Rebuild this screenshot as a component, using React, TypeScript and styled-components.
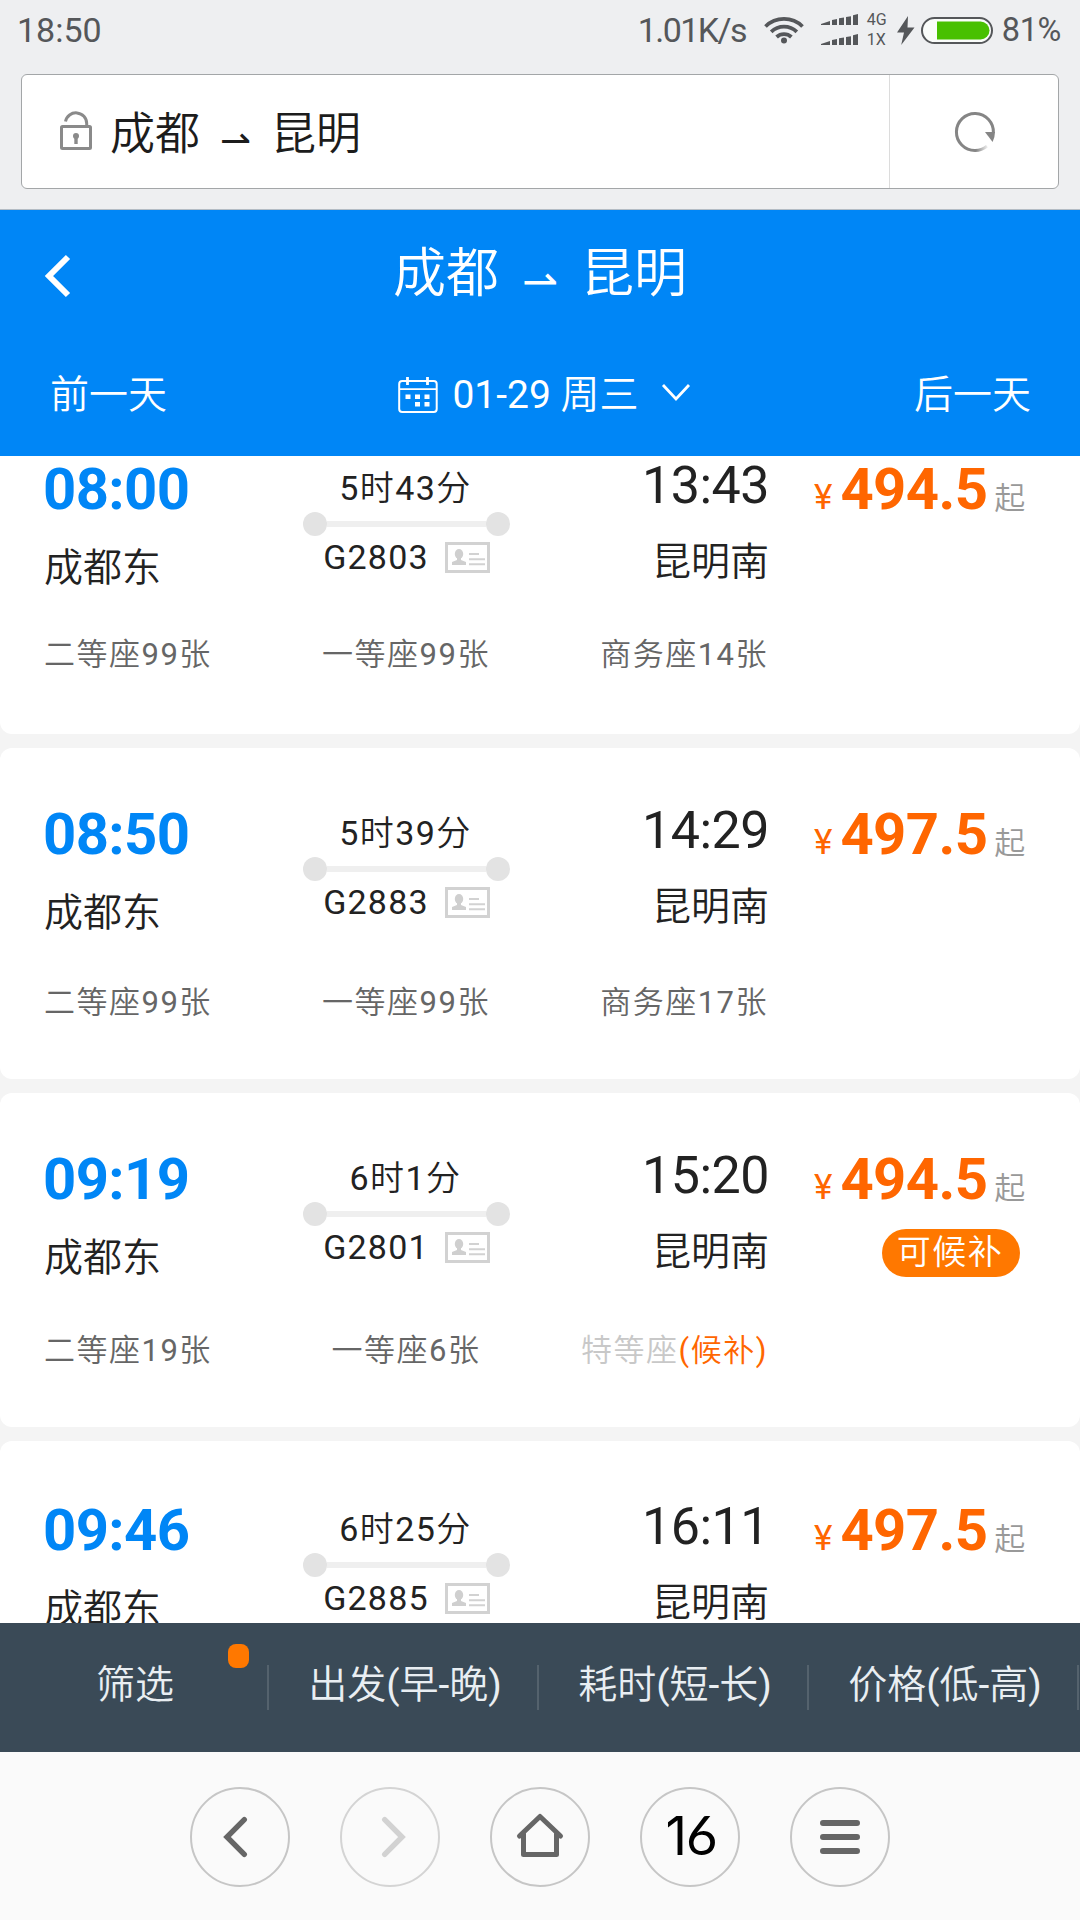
import React from "react";
import styled, { createGlobalStyle } from "styled-components";

const cjk = `"Noto Sans CJK SC DemiLight", "Noto Sans CJK SC", sans-serif`;

const GlobalStyle = createGlobalStyle`
  * { box-sizing: border-box; }
  html, body { margin: 0; padding: 0; }
  body {
    width: 1080px;
    height: 1920px;
    overflow: hidden;
    background: #f4f4f4;
    font-family: Roboto, ${cjk};
  }
`;

const Screen = styled.div`
  width: 1080px;
  height: 1920px;
  display: flex;
  flex-direction: column;
  overflow: hidden;
`;

const BrowserTop = styled.div`
  height: 210px;
  flex: none;
  background: #eeeff1;
  border-bottom: 1px solid #b4bcc4;
  display: flex;
  flex-direction: column;
`;

const StatusBar = styled.div`
  height: 74px;
  padding: 0 19px 14px 17px;
  display: flex;
  align-items: center;
  color: #55575a;
  font-size: 34px;
`;

const Clock = styled.span`
  flex: 1;
`;
const Speed = styled.span`
  margin-right: 18px;
  letter-spacing: -1.6px;
`;
const Percent = styled.span`
  margin-left: 9px;
  font-size: 32.5px;
  letter-spacing: -0.4px;
`;
const NetLabels = styled.div`
  display: flex;
  flex-direction: column;
  width: 24px;
  margin: 0 6px 0 8px;
  font-size: 16px;
  line-height: 20px;
`;
const SignalGroup = styled.div`
  display: flex;
  align-items: center;
  margin-left: 17px;
`;
const BatteryGroup = styled.div`
  display: flex;
  align-items: center;
  gap: 6px;
`;

const AddressBar = styled.div`
  height: 115px;
  margin: 0 21px;
  border: 1px solid #a3a6a8;
  border-radius: 6px;
  background: #fff;
  display: flex;
`;
const AddressText = styled.div`
  flex: 1;
  display: flex;
  align-items: center;
  padding: 0 0 3px 37px;
  font-size: 45px;
  color: #1c1c1c;
  svg { margin-right: 17px; }
`;
const RefreshButton = styled.div`
  width: 169px;
  border-left: 1px solid #dcdcdc;
  display: flex;
  align-items: center;
  justify-content: center;
  padding-left: 1px;
`;

const City = styled.span`
  font-family: ${cjk};
`;
const Harpoon = styled.span<{ $size: number; $gap: number; $drop: number }>`
  font-family: "DejaVu Sans", sans-serif;
  font-size: ${(p) => p.$size}px;
  margin: 0 ${(p) => p.$gap}px;
  padding-top: ${(p) => p.$drop}px;
`;

const Header = styled.header`
  height: 246px;
  flex: none;
  background: #0086f6;
  color: #fff;
  display: flex;
  flex-direction: column;
`;
const TitleRow = styled.div`
  height: 126px;
  padding: 0 42px;
  display: grid;
  grid-template-columns: 60px 1fr 60px;
  align-items: center;
`;
const BackArrow = styled.svg`
  margin-top: 6px;
`;
const Title = styled.div`
  display: flex;
  justify-content: center;
  align-items: center;
  height: 78px;
  font-size: 53px;
  padding-bottom: 9px;
`;
const DateRow = styled.div`
  height: 120px;
  padding: 0 49px 10px 50px;
  display: flex;
  align-items: center;
  justify-content: space-between;
  font-size: 39px;
`;
const DayLink = styled.span`
  font-family: ${cjk};
`;
const DatePick = styled.div`
  display: flex;
  align-items: center;
  margin-left: 8px;
  white-space: pre;
  svg:first-child { margin: 7px 14px 0 0; }
  svg:last-child { margin: 4px 0 0 22px; }
`;

const List = styled.main`
  flex: 1;
  min-height: 0;
  overflow: hidden;
  display: flex;
  flex-direction: column;
  background: #f4f4f4;
`;
const Card = styled.article<{ $height: number; $top: number; $first?: boolean }>`
  height: ${(p) => p.$height}px;
  flex: none;
  margin-bottom: 14px;
  padding-top: ${(p) => p.$top}px;
  background: #fff;
  border-radius: ${(p) => (p.$first ? "0 0 12px 12px" : "12px")};
`;
const Trip = styled.div<{ $height: number }>`
  height: ${(p) => p.$height}px;
  padding-left: 44px;
  display: grid;
  grid-template-columns: 241px 243px 241px 1fr;
  color: #222;
`;
const Column = styled.div<{ $align: string }>`
  display: flex;
  flex-direction: column;
  align-items: ${(p) => p.$align};
`;
const Depart = styled.div`
  margin-left: -1px;
  font-size: 58px;
  line-height: 60px;
  font-weight: 700;
  letter-spacing: -0.6px;
  color: #0086f6;
`;
const Arrive = styled.div`
  font-size: 52px;
  line-height: 54px;
  letter-spacing: -0.5px;
`;
const Station = styled.div`
  margin-top: 22px;
  font-family: ${cjk};
  font-size: 39px;
  line-height: 46px;
`;
const Duration = styled.div`
  margin: 9px 2px 0 0;
  height: 40px;
  font-size: 34px;
  line-height: 40px;
  letter-spacing: 1.4px;
`;
const Track = styled.div`
  width: 207px;
  height: 24px;
  margin-top: 4px;
  display: flex;
  align-items: center;
`;
const Stop = styled.i`
  width: 24px;
  height: 24px;
  border-radius: 50%;
  background: #e3e3e3;
`;
const Rail = styled.i`
  flex: 1;
  height: 6px;
  background: #efefef;
`;
const TrainNo = styled.div`
  height: 42px;
  display: flex;
  align-items: center;
  font-size: 34px;
  letter-spacing: 1.2px;
  svg { margin-left: 16px; }
`;
const Price = styled.div`
  display: flex;
  align-items: baseline;
  margin-left: 45px;
  color: #ff6600;
  font-size: 35px;
  line-height: 60px;
`;
const Amount = styled.b`
  font-size: 58px;
  margin-left: 8px;
  letter-spacing: -0.6px;
`;
const From = styled.small`
  font-size: 31px;
  color: #999;
  margin-left: 7px;
`;
const Badge = styled.div`
  margin: 10px 60px 0 0;
  align-self: flex-end;
  width: 138px;
  height: 48px;
  padding-right: 2px;
  border-radius: 24px;
  background: #ff7800;
  color: #fff;
  font-size: 34px;
  line-height: 47px;
  letter-spacing: 1.5px;
  text-align: center;
`;
const Seats = styled.div`
  width: 768px;
  padding-left: 44px;
  display: grid;
  grid-template-columns: 241px 242px 241px;
  font-size: 31px;
  line-height: 36px;
  letter-spacing: 1.5px;
  color: #666;
  white-space: nowrap;
`;
const Seat = styled.span<{ $align: string }>`
  justify-self: ${(p) => p.$align};
`;
const SoldOut = styled.span`
  color: #c8c8c8;
`;
const Waitlist = styled.span`
  color: #ff6600;
`;

const FilterBar = styled.div`
  height: 129px;
  flex: none;
  display: grid;
  grid-template-columns: repeat(4, 270px);
  background: #3a4a57;
`;
const FilterItem = styled.div`
  position: relative;
  display: flex;
  align-items: center;
  justify-content: center;
  padding-bottom: 13px;
  color: #e9eef2;
  font-size: 39px;
  &::after {
    content: "";
    position: absolute;
    right: 1px;
    top: 42px;
    width: 2px;
    height: 45px;
    background: #54626d;
  }
`;
const Dot = styled.i`
  position: absolute;
  left: 228px;
  top: 21px;
  width: 21px;
  height: 24px;
  border-radius: 8px;
  background: #ff7800;
`;

const NavBar = styled.nav`
  height: 168px;
  flex: none;
  padding-top: 2px;
  background: #fafafa;
  display: flex;
  align-items: center;
  justify-content: center;
  gap: 50px;
`;
const NavButton = styled.div<{ $dim?: boolean }>`
  width: 100px;
  height: 100px;
  border: 2px solid ${(p) => (p.$dim ? "#d4d4d4" : "#c6c6c6")};
  border-radius: 50%;
  display: flex;
  align-items: center;
  justify-content: center;
`;
const TabCount = styled.span`
  display: flex;
  align-items: baseline;
  padding: 0 0 4px 2px;
  font-family: Inter, sans-serif;
  font-size: 53px;
  line-height: 60px;
  letter-spacing: -1px;
  color: #000;
`;
const CountTail = styled.span`
  font-family: Lato, sans-serif;
  font-size: 54px;
`;

const LockIcon = () => (
  <svg width="34" height="42" viewBox="0 0 34 42" fill="none" stroke="#8a8a8a" strokeWidth="3">
    <path d="M6.5 12.5a10.7 10.7 0 0 1 21.2 2V18" />
    <rect x="2.5" y="17.5" width="29" height="22" rx="1" />
    <circle cx="17" cy="27" r="3" fill="#8a8a8a" stroke="none" />
    <path d="M17 27v8" strokeWidth="3.4" />
  </svg>
);

const RefreshIcon = () => (
  <svg width="42" height="42" viewBox="0 0 42 42" fill="none">
    <defs>
      <linearGradient id="fade" x1="22" y1="0" x2="34" y2="0" gradientUnits="userSpaceOnUse">
        <stop offset="0" stopColor="#858585" />
        <stop offset="1" stopColor="#858585" stopOpacity="0.1" />
      </linearGradient>
    </defs>
    <path d="M39.4 22A18.5 18.5 0 1 0 21 39.5" stroke="#858585" strokeWidth="3" />
    <path d="M21 39.5a18.5 18.5 0 0 0 12-4.4" stroke="url(#fade)" strokeWidth="3" />
    <path d="M31 21h10q0 5-2.4 10z" fill="#858585" />
  </svg>
);

const WifiIcon = () => (
  <svg width="40" height="28" viewBox="0 0 40 28" fill="none" stroke="#55575a" strokeWidth="3.8">
    <path d="M1.5 10.5a26.5 26.5 0 0 1 37 0" />
    <path d="M7.2 15.8a18.6 18.6 0 0 1 25.6 0" />
    <path d="M12.6 21a10.8 10.8 0 0 1 14.8 0" />
    <circle cx="20" cy="24.6" r="3" fill="#55575a" stroke="none" />
  </svg>
);

const SignalIcon = () => (
  <svg width="38" height="32" viewBox="0 0 38 32" fill="#55575a">
    {[0, 20].map((y) => (
      <g key={y} transform={`translate(0 ${y})`}>
        <path d="M0 11V10l9-3v4z" />
        <path d="M11 6l5-1v6h-5z" />
        <path d="M18 4.3l5-.8V11h-5z" />
        <path d="M25 3l5-.8V11h-5z" />
        <path d="M32 1.3L37 0v11h-5z" />
      </g>
    ))}
  </svg>
);

const BoltIcon = () => (
  <svg width="18" height="29" viewBox="0 0 18 29" fill="#55575a">
    <path d="M11 0L0 16.5h7L4.2 29 17.5 11.6h-7z" />
  </svg>
);

const BatteryIcon = () => (
  <svg width="72" height="27" viewBox="0 0 72 27">
    <rect x="1" y="1" width="70" height="25" rx="12.5" fill="#fafcfa" stroke="#55575a" strokeWidth="2" />
    <path d="M16 4.5h43.5a9 9 0 0 1 0 18H16z" fill="#48c000" />
  </svg>
);

const CalendarIcon = () => (
  <svg width="40" height="38" viewBox="0 0 40 38" fill="none" stroke="#fff">
    <rect x="1.2" y="5" width="37.5" height="31" rx="3" strokeWidth="2" />
    <path d="M1 13.2h38" strokeWidth="1.8" />
    <path d="M9.5 1v8M29.5 1v8" strokeWidth="2.8" />
    <path
      d="M7.5 18.5h5v4.5h-5zM17 18.5h5V23h-5zM26.5 18.5h5V23h-5zM17 26h5v4.5h-5zM26.5 26h5v4.5h-5z"
      fill="#fff"
      stroke="none"
    />
  </svg>
);

const IdCardIcon = () => (
  <svg width="45" height="31" viewBox="0 0 45 31" fill="none" stroke="#d2d2d2">
    <rect x="1.5" y="1.5" width="42" height="28" strokeWidth="3" />
    <ellipse cx="14" cy="12" rx="4.2" ry="5" fill="#cfcfcf" stroke="none" />
    <path d="M12 15h4v3l5 2v3H7v-3l5-2z" fill="#cfcfcf" stroke="none" />
    <path d="M24 12h10M24 17.2h16M24 22.2h16" strokeWidth="2" />
  </svg>
);

interface Train {
  depart: string;
  arrive: string;
  duration: string;
  code: string;
  price: string;
  seats: React.ReactNode[];
  waitlist?: boolean;
  height: number;
  top: number;
  tripHeight: number;
}

const trains: Train[] = [
  {
    depart: "08:00", arrive: "13:43", duration: "5时43分", code: "G2803", price: "494.5",
    seats: ["二等座99张", "一等座99张", "商务座14张"],
    height: 278, top: 3, tripHeight: 178,
  },
  {
    depart: "08:50", arrive: "14:29", duration: "5时39分", code: "G2883", price: "497.5",
    seats: ["二等座99张", "一等座99张", "商务座17张"],
    height: 331, top: 56, tripHeight: 181,
  },
  {
    depart: "09:19", arrive: "15:20", duration: "6时1分", code: "G2801", price: "494.5",
    seats: [
      "二等座19张",
      "一等座6张",
      <><SoldOut>特等座</SoldOut><Waitlist>(候补)</Waitlist></>,
    ],
    waitlist: true, height: 334, top: 56, tripHeight: 184,
  },
  {
    depart: "09:46", arrive: "16:11", duration: "6时25分", code: "G2885", price: "497.5",
    seats: [], height: 334, top: 59, tripHeight: 184,
  },
];

const columnAlign = ["start", "center", "end"];

const TrainCard = ({ train, first }: { train: Train; first: boolean }) => (
  <Card $height={train.height} $top={train.top} $first={first}>
    <Trip $height={train.tripHeight}>
      <Column $align="flex-start">
        <Depart>{train.depart}</Depart>
        <Station>成都东</Station>
      </Column>
      <Column $align="center">
        <Duration>{train.duration}</Duration>
        <Track><Stop /><Rail /><Stop /></Track>
        <TrainNo>{train.code}<IdCardIcon /></TrainNo>
      </Column>
      <Column $align="flex-end">
        <Arrive>{train.arrive}</Arrive>
        <Station>昆明南</Station>
      </Column>
      <Column $align="flex-start">
        <Price>¥<Amount>{train.price}</Amount><From>起</From></Price>
        {train.waitlist && <Badge>可候补</Badge>}
      </Column>
    </Trip>
    <Seats>
      {train.seats.map((seat, i) => (
        <Seat key={i} $align={columnAlign[i]}>{seat}</Seat>
      ))}
    </Seats>
  </Card>
);

export default function App() {
  return (
    <Screen>
      <GlobalStyle />
      <BrowserTop>
        <StatusBar>
          <Clock>18:50</Clock>
          <Speed>1.01K/s</Speed>
          <WifiIcon />
          <SignalGroup>
            <SignalIcon />
            <NetLabels><span>4G</span><span>1X</span></NetLabels>
          </SignalGroup>
          <BatteryGroup>
            <BoltIcon />
            <BatteryIcon />
          </BatteryGroup>
          <Percent>81%</Percent>
        </StatusBar>
        <AddressBar>
          <AddressText>
            <LockIcon />
            <City>成都</City>
            <Harpoon $size={37} $gap={20} $drop={21}>⇀</Harpoon>
            <City>昆明</City>
          </AddressText>
          <RefreshButton><RefreshIcon /></RefreshButton>
        </AddressBar>
      </BrowserTop>

      <Header>
        <TitleRow>
          <BackArrow width="30" height="44" viewBox="0 0 30 44" fill="none" stroke="#fff" strokeWidth="6">
            <path d="M26 3L7 22l19 19" />
          </BackArrow>
          <Title>
            <City>成都</City>
            <Harpoon $size={43} $gap={23} $drop={24}>⇀</Harpoon>
            <City>昆明</City>
          </Title>
        </TitleRow>
        <DateRow>
          <DayLink>前一天</DayLink>
          <DatePick>
            <CalendarIcon />
            01-29 周三
            <svg width="30" height="20" viewBox="0 0 30 20" fill="none" stroke="#fff" strokeWidth="2.8">
              <path d="M2 2l13 14L28 2" />
            </svg>
          </DatePick>
          <DayLink>后一天</DayLink>
        </DateRow>
      </Header>

      <List>
        {trains.map((t, i) => (
          <TrainCard key={t.code} train={t} first={i === 0} />
        ))}
      </List>

      <FilterBar>
        <FilterItem>筛选<Dot /></FilterItem>
        <FilterItem>出发(早-晚)</FilterItem>
        <FilterItem>耗时(短-长)</FilterItem>
        <FilterItem>价格(低-高)</FilterItem>
      </FilterBar>

      <NavBar>
        <NavButton>
          <svg width="50" height="50" viewBox="0 0 50 50" fill="none" stroke="#666" strokeWidth="5.4" strokeLinecap="round">
            <path d="M29.3 7.7L12 25l17.3 17.3" />
          </svg>
        </NavButton>
        <NavButton $dim>
          <svg width="50" height="50" viewBox="0 0 50 50" fill="none" stroke="#d2d2d2" strokeWidth="5.4" strokeLinecap="round">
            <path d="M19.7 7.7L37 25 19.7 42.3" />
          </svg>
        </NavButton>
        <NavButton>
          <svg width="50" height="50" viewBox="0 0 50 50" fill="none" stroke="#666" strokeWidth="5" strokeLinejoin="round" strokeLinecap="round">
            <path d="M4.5 24L25 4.5 45.5 24" />
            <path d="M8.5 22v20.5h33V22" />
          </svg>
        </NavButton>
        <NavButton><TabCount>1<CountTail>6</CountTail></TabCount></NavButton>
        <NavButton>
          <svg width="40" height="34" viewBox="0 0 40 34" fill="none" stroke="#666" strokeWidth="6" strokeLinecap="round">
            <path d="M3 3h34M3 17h34M3 31h34" />
          </svg>
        </NavButton>
      </NavBar>
    </Screen>
  );
}
